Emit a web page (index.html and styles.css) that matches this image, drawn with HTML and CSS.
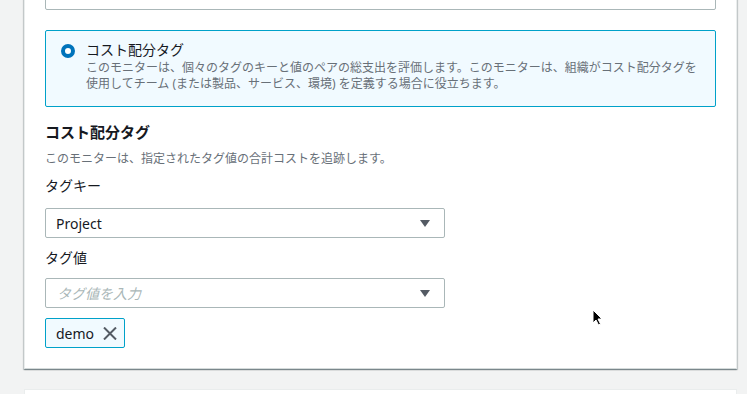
FILE: index.html
```html
<!DOCTYPE html>
<html lang="ja">
<head>
  <meta charset="UTF-8">
  <title>コスト配分タグ</title>
  <link rel="stylesheet" href="styles.css">
</head>
<body>
  <div class="page">
    <div class="card">
      <div class="field-box"></div>

      <!-- Monitor type tile -->
      <div class="tile">
        <span class="radio"></span>
        <div class="tile-text">
          <div class="tile-title">コスト配分タグ</div>
          <div class="tile-desc">このモニターは、個々のタグのキーと値のペアの総支出を評価します。このモニターは、組織がコスト配分タグを使用してチーム (または製品、サービス、環境) を定義する場合に役立ちます。</div>
        </div>
      </div>

      <h3 class="section-title">コスト配分タグ</h3>
      <p class="section-desc">このモニターは、指定されたタグ値の合計コストを追跡します。</p>

      <div class="label label-key">タグキー</div>
      <div class="select">
        <span>Project</span>
        <svg class="caret" width="10" height="7" viewBox="0 0 10 7"><path d="M0 0h10L5 7z" fill="#545b64"/></svg>
      </div>

      <div class="label label-value">タグ値</div>
      <div class="select">
        <span class="placeholder">タグ値を入力</span>
        <svg class="caret" width="10" height="7" viewBox="0 0 10 7"><path d="M0 0h10L5 7z" fill="#545b64"/></svg>
      </div>

      <div class="token">
        <span>demo</span>
        <svg width="14" height="13" viewBox="0 0 14 13"><path d="M1 0.5l12 12M13 0.5l-12 12" stroke="#545b64" stroke-width="2" fill="none"/></svg>
      </div>
    </div>

    <div class="card card-next"></div>
  </div>

  <svg class="cursor" width="12" height="18" viewBox="0 0 12 18"><path d="M1 1v13l3-3 2.5 5 2-1-2.5-5H10z" fill="#000" stroke="#fff" stroke-width="1"/></svg>
</body>
</html>
```

FILE: styles.css
```css
body {
  margin: 0;
  background: #f2f3f3;
  font-family: "Noto Sans", "Noto Sans CJK JP", sans-serif;
  color: #16191f;
  overflow: hidden;
}
.page {
  padding: 0 10px 0 24px;
}
.card {
  width: 671px;
  background: #fff;
  border: 1px solid #eaeded;
  border-bottom-color: #d5dbdb;
  box-shadow: 0 1px 1px 0 rgba(0, 28, 36, 0.3), 1px 1px 1px 0 rgba(0, 28, 36, 0.15), -1px 1px 1px 0 rgba(0, 28, 36, 0.15);
  padding: 20px;
  margin-top: -43px;
}
.card .field-box,
.card .tile,
.card .select,
.card .token {
  box-sizing: border-box;
}
.card-next {
  margin-top: 20px;
  height: 40px;
  padding: 0;
  width: 711px;
  box-shadow: none;
  border-color: #eaeded;
}
.field-box {
  height: 32px;
  border: 1px solid #aab7b8;
  border-radius: 2px;
}
.tile {
  display: flex;
  margin-top: 20px;
  border: 1px solid #00a1c9;
  border-radius: 2px;
  background: #f1faff;
  padding: 9px 15px 14px 15px;
}
.radio {
  flex: none;
  width: 14px;
  height: 14px;
  border: 4px solid #0073bb;
  border-radius: 50%;
  background: #fff;
  box-sizing: border-box;
  margin-top: 4px;
  margin-right: 11px;
}
.tile-title {
  font-size: 14px;
  line-height: 20px;
}
.tile-desc {
  font-size: 12px;
  line-height: 16px;
  color: #687078;
}
.section-title {
  margin: 14px 0 0;
  font-size: 15px;
  line-height: 22px;
  font-weight: bold;
}
.section-desc {
  margin: 8px 0 0;
  font-size: 12px;
  line-height: 16px;
  color: #687078;
}
.label {
  font-size: 14px;
  line-height: 20px;
}
.label-key {
  margin-top: 9px;
  margin-bottom: 12px;
}
.label-value {
  margin-top: 10px;
  margin-bottom: 10px;
}
.select {
  display: flex;
  align-items: center;
  justify-content: space-between;
  width: 400px;
  height: 30px;
  border: 1px solid #aab7b8;
  border-radius: 2px;
  padding: 0 14px 0 10px;
  font-size: 14px;
}
.placeholder {
  color: #aab7b8;
  font-style: italic;
  padding-left: 1px;
}
.caret {
  display: block;
}
.token {
  display: inline-flex;
  align-items: center;
  margin-top: 10px;
  height: 30px;
  border: 1px solid #00a1c9;
  border-radius: 2px;
  background: #f1faff;
  padding: 0 7px 0 10px;
  font-size: 14px;
}
.token svg {
  margin-left: 9px;
}
.cursor {
  position: absolute;
  left: 592px;
  top: 309px;
}
```
